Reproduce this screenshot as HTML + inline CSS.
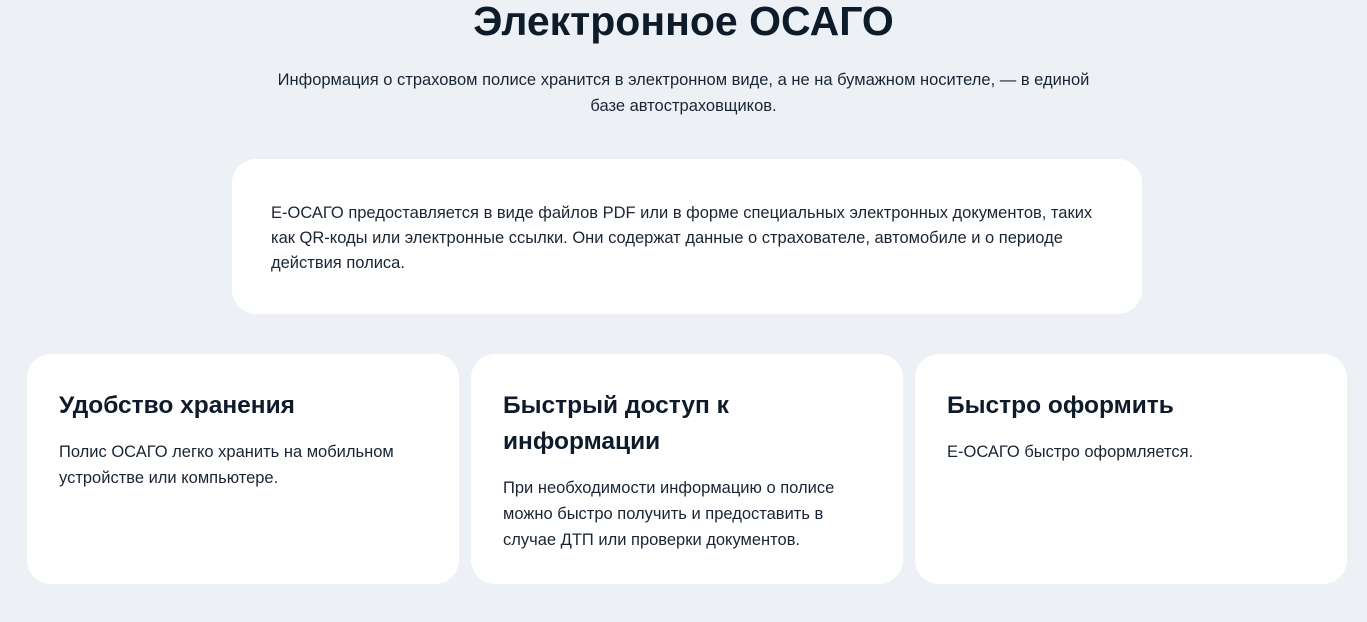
<!DOCTYPE html>
<html><head><meta charset="utf-8"><style>
*{margin:0;padding:0;box-sizing:border-box}
body{width:1367px;height:622px;background:#edf1f5;font-family:"Liberation Sans","DejaVu Sans",sans-serif;color:#0d1b2a;position:relative;overflow:hidden}
h1{position:absolute;left:0;width:1367px;top:-4px;text-align:center;font-size:41px;line-height:50px;font-weight:bold;color:#0d1b2a}
.sub{position:absolute;left:0;width:1367px;top:67px;text-align:center;font-size:16.5px;line-height:26px;color:#1a2533}
.box{position:absolute;background:#fff;border-radius:24px}
.intro{left:232px;top:159px;width:910px;height:155px;padding:42px 39px;font-size:16.5px;line-height:25px;color:#1a2533}
.card{top:354px;width:432px;height:230px;padding:34px 32px}
.card h2{font-size:24.5px;line-height:36px;font-weight:600;color:#0d1b2a;margin-bottom:15px}
.card p{font-size:16.5px;line-height:26px;color:#1a2533}
</style></head><body>
<h1>Электронное ОСАГО</h1>
<div class="sub">Информация о страховом полисе хранится в электронном виде, а не на бумажном носителе, — в единой<br>базе автостраховщиков.</div>
<div class="box intro">E-ОСАГО предоставляется в виде файлов PDF или в форме специальных электронных документов, таких как QR-коды или электронные ссылки. Они содержат данные о страхователе, автомобиле и о периоде действия полиса.</div>
<div class="box card" style="left:27px"><h2>Удобство хранения</h2><p>Полис ОСАГО легко хранить на мобильном<br>устройстве или компьютере.</p></div>
<div class="box card" style="left:471px"><h2>Быстрый доступ к<br>информации</h2><p>При необходимости информацию о полисе<br>можно быстро получить и предоставить в<br>случае ДТП или проверки документов.</p></div>
<div class="box card" style="left:915px"><h2>Быстро оформить</h2><p>E-ОСАГО быстро оформляется.</p></div>
</body></html>
